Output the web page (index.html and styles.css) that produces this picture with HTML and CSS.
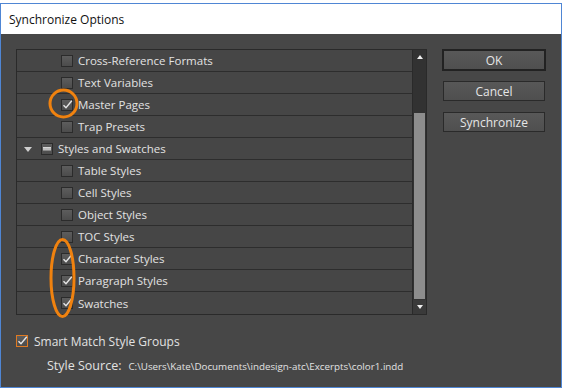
FILE: index.html
```html
<!DOCTYPE html>
<html>
<head>
<meta charset="utf-8">
<link rel="stylesheet" href="styles.css">
</head>
<body>
<div class="window">
  <div class="titlebar">Synchronize Options</div>
  <div class="content">
    <div class="main">
      <div class="list">
        <div class="rows">
          <div class="row child"><span class="cb"></span><span class="label">Cross-Reference Formats</span></div>
          <div class="row child"><span class="cb"></span><span class="label">Text Variables</span></div>
          <div class="row child"><span class="cb checked"><svg viewBox="0 0 12 12"><path d="M2.5 6.2 L5 8.8 L10.8 1.8"/></svg></span><span class="label">Master Pages</span></div>
          <div class="row child"><span class="cb"></span><span class="label">Trap Presets</span></div>
          <div class="row parent"><span class="tri"></span><span class="cb mixed"><span class="dash"></span></span><span class="label">Styles and Swatches</span></div>
          <div class="row child"><span class="cb"></span><span class="label">Table Styles</span></div>
          <div class="row child"><span class="cb"></span><span class="label">Cell Styles</span></div>
          <div class="row child"><span class="cb"></span><span class="label">Object Styles</span></div>
          <div class="row child"><span class="cb"></span><span class="label">TOC Styles</span></div>
          <div class="row child"><span class="cb checked"><svg viewBox="0 0 12 12"><path d="M2.5 6.2 L5 8.8 L10.8 1.8"/></svg></span><span class="label">Character Styles</span></div>
          <div class="row child"><span class="cb checked"><svg viewBox="0 0 12 12"><path d="M2.5 6.2 L5 8.8 L10.8 1.8"/></svg></span><span class="label">Paragraph Styles</span></div>
          <div class="row child last"><span class="cb checked"><svg viewBox="0 0 12 12"><path d="M2.5 6.2 L5 8.8 L10.8 1.8"/></svg></span><span class="label">Swatches</span></div>
        </div>
        <div class="scrollbar">
          <div class="arrow up"><span></span></div>
          <div class="track"><div class="thumb"></div></div>
          <div class="arrow down"><span></span></div>
        </div>
      </div>
      <div class="buttons">
        <div class="btn default">OK</div>
        <div class="btn cancel">Cancel</div>
        <div class="btn sync">Synchronize</div>
      </div>
    </div>
    <div class="options">
      <div class="smart"><span class="cb checked orange"><svg viewBox="0 0 12 12"><path d="M2.5 6.2 L5 8.8 L10.8 1.8"/></svg></span><span class="label">Smart Match Style Groups</span></div>
      <div class="source"><span class="src-label">Style Source:</span><span class="path">C:\Users\Kate\Documents\indesign-atc\Excerpts\color1.indd</span></div>
    </div>
  </div>
</div>
<svg class="annot" width="562" height="392" viewBox="0 0 562 392">
  <circle cx="63.5" cy="103.5" r="13.5"/>
  <ellipse cx="62.5" cy="278" rx="11.5" ry="38.5"/>
</svg>
</body>
</html>
```

FILE: styles.css
```css
* { box-sizing: border-box; }
html, body { margin: 0; padding: 0; background: #fff; }
body {
  position: relative;
  width: 562px;
  height: 392px;
  overflow: hidden;
  font-family: "Open Sans", "Noto Sans", sans-serif;
  font-size: 11.5px;
}
.window {
  margin-top: 3px;
  width: 562px;
  height: 385px;
  border: 1px solid #4f86d4;
  display: flex;
  flex-direction: column;
}
.titlebar {
  height: 30px;
  background: #fff;
  color: #111;
  font-size: 12px;
  padding-left: 8px;
  display: flex;
  align-items: center;
  padding-top: 1px;
}
.content {
  flex: 1;
  background: #474747;
  padding: 15px 0 0 15px;
  display: flex;
  flex-direction: column;
}
.main {
  display: flex;
  align-items: flex-start;
}
.list {
  width: 411px;
  height: 266px;
  border: 1px solid #2a2a2a;
  display: flex;
  background: #464646;
}
.rows { flex: 1; }
.row {
  height: 22px;
  border-bottom: 1px solid #2d2d2d;
  display: flex;
  align-items: center;
  color: #e2e2e2;
}
.row.last { border-bottom: none; }
.row.child { padding-left: 44px; }
.row.parent { padding-left: 7px; }
.tri {
  width: 0; height: 0;
  border-left: 4px solid transparent;
  border-right: 4px solid transparent;
  border-top: 5px solid #cfcfcf;
  margin-right: 9px;
  margin-top: 1px;
}
.cb {
  width: 12px; height: 12px;
  border: 1px solid #2b2b2b;
  background: linear-gradient(#5d5d5d, #4c4c4c);
  margin-right: 5px;
  position: relative;
  flex: none;
}
.cb svg {
  position: absolute;
  left: -1px; top: -1px;
  width: 12px; height: 12px;
  overflow: visible;
}
.cb svg path {
  fill: none;
  stroke: #e6e6e6;
  stroke-width: 1.4;
}
.cb.mixed { display: flex; align-items: center; justify-content: center; }
.dash {
  width: 8px; height: 4px;
  background: #bdbdbd;
  border-top: 1px solid #d6d6d6;
  border-bottom: 1px solid #8a8a8a;
}
.label { white-space: nowrap; }
.scrollbar {
  width: 14px;
  border-left: 1px solid #2a2a2a;
  background: #323232;
  display: flex;
  flex-direction: column;
}
.arrow {
  height: 13px;
  display: flex;
  align-items: center;
  justify-content: center;
}
.arrow.down { background: #3a3a3a; height: 14px; }
.arrow.up span {
  width: 0; height: 0;
  border-left: 3.5px solid transparent;
  border-right: 3.5px solid transparent;
  border-bottom: 4px solid #eee;
}
.arrow.down span {
  width: 0; height: 0;
  border-left: 3.5px solid transparent;
  border-right: 3.5px solid transparent;
  border-top: 4px solid #eee;
}
.track {
  flex: 1;
  display: flex;
  flex-direction: column;
  justify-content: flex-end;
  padding: 0 1px 1px 1px;
}
.thumb {
  height: 186px;
  background: #8d8d8d;
}
.buttons {
  margin-left: 15px;
  width: 104px;
  display: flex;
  flex-direction: column;
}
.btn {
  color: #e6e6e6;
  font-size: 12px;
  display: flex;
  align-items: center;
  justify-content: center;
  background: linear-gradient(#585858, #4f4f4f);
  border: 1px solid #2a2a2a;
}
.btn.default {
  height: 22px;
  border: 2px solid #222;
}
.btn.cancel { height: 20px; margin: 10px 1px 0; }
.btn.sync { height: 20px; margin: 11px 1px 0; }
.options {
  margin-top: 19px;
  color: #e2e2e2;
}
.smart {
  display: flex;
  align-items: center;
  height: 14px;
  font-size: 12px;
}
.cb.orange {
  border: 1px solid #e07a22;
  margin-right: 6px;
}
.source {
  margin-top: 9px;
  padding-left: 31px;
  display: flex;
  align-items: baseline;
}
.src-label { font-size: 12.5px; margin-right: 7px; }
.path { font-size: 9.8px; }
.annot {
  position: absolute;
  left: 0; top: 0;
  pointer-events: none;
}
.annot circle, .annot ellipse {
  fill: none;
  stroke: #f0820f;
  stroke-width: 3;
}
```
